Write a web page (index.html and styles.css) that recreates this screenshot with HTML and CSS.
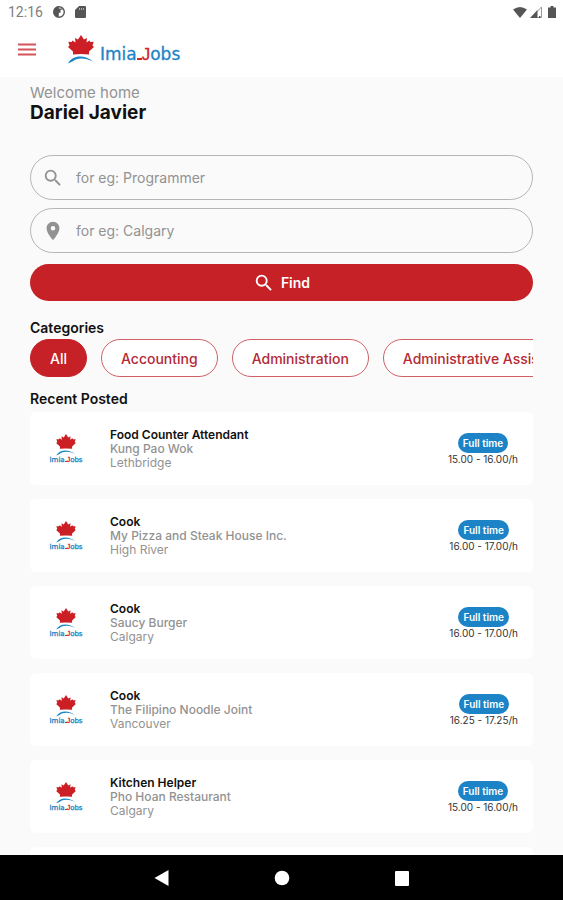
FILE: index.html
```html
<!DOCTYPE html>
<html lang="en">
<head>
    <meta charset="UTF-8">
    <meta name="viewport" content="width=device-width, initial-scale=1.0">
    <title>ImiaJobs</title>
    <link rel="stylesheet" href="styles.css">
</head>
<body>
    <!-- Shared icons -->
    <svg class="sprite" aria-hidden="true">
        <symbol id="mark" viewBox="0 0 26 29">
            <path fill="#cb1f25" d="M13 0 16 4.500 19 3 18.500 7.500 21.500 5.500 22.300 7 25.700 6.800 24.500 10.500 26 12 21 16.500 21 19.500Q13 18.500 5 19.500L5 16.500 0 12 1.500 10.500.3 6.800 3.700 7 4.500 5.500 7.500 7.500 7 3 10 4.500Z"/>
            <path fill="#1b87c5" d="M0 28.500C4 20.500 16 19 25 26.500 17 22.500 9 22.500 4.500 26.500Z"/>
        </symbol>
        <symbol id="search" viewBox="0 0 24 24">
            <path fill="currentColor" d="M15.500 14h-.79l-.28-.27A6.470 6.470 0 0 0 16 9.500 6.500 6.500 0 1 0 9.500 16c1.610 0 3.090-.59 4.230-1.570l.27.28v.79l5 4.990L20.490 19l-4.990-5zm-6 0C7.010 14 5 11.990 5 9.500S7.010 5 9.500 5 14 7.010 14 9.500 11.990 14 9.500 14z"/>
        </symbol>
        <symbol id="place" viewBox="0 0 24 24">
            <path fill="currentColor" d="M12 2C8.130 2 5 5.130 5 9c0 5.250 7 13 7 13s7-7.750 7-13c0-3.870-3.130-7-7-7zm0 9.500a2.500 2.500 0 0 1 0-5 2.500 2.500 0 0 1 0 5z"/>
        </symbol>
    </svg>

    <div class="app">
        <div class="status-bar">
            <span class="clock">12:16</span>
            <svg width="12" height="12" viewBox="0 0 12 12"><circle cx="6" cy="6" r="5.300" fill="#fff" stroke="#555" stroke-width="1.400"/><path fill="#555" d="M1 3 4 .5h1.800V11L3 10.500 1 8zM5 2.500h4.500v1.300H7.500v3H5z"/></svg>
            <svg width="11" height="12" viewBox="0 0 11 12"><path fill="#555" d="M4 0h6q1 0 1 1v10q0 1-1 1H1q-1 0-1-1V4z"/><path stroke="#aaa" d="M4.500 2v2M6.500 2v2M8.500 2v2"/></svg>
            <div class="status-right">
                <svg width="14" height="11" viewBox="0 0 14 11"><path fill="#555" d="M0 2.500q7-5 14 0L7 11z"/></svg>
                <svg width="12" height="12" viewBox="0 0 12 12"><path fill="none" stroke="#999" d="M1.500 11.500 11.500 1v10.500z"/><path fill="#555" d="M0 12 7.500 4v8zM9 10h1.500v2H9z"/></svg>
                <svg width="8" height="12" viewBox="0 0 8 12"><path fill="#555" d="M2.500 0h3v1.500H8V12H0V1.500h2.500z"/></svg>
            </div>
        </div>

        <header class="app-bar">
            <button class="menu" type="button" aria-label="Menu">
                <svg width="18" height="14" viewBox="0 0 18 14"><path stroke="#d4555b" stroke-width="2" d="M0 1.500h18M0 6.500h18M0 11.500h18"/></svg>
            </button>
            <div class="logo">
                <svg class="mark" aria-hidden="true"><use href="#mark"/></svg>
                <span class="wordmark">Imia<span class="j">J</span>obs</span>
            </div>
        </header>

        <main>
            <p class="welcome">Welcome home</p>
            <h1>Dariel Javier</h1>

            <form class="search-form">
                <label class="field">
                    <svg class="icon" aria-hidden="true"><use href="#search"/></svg>
                    <input type="text" name="job" placeholder="for eg: Programmer" aria-label="Job">
                </label>
                <label class="field">
                    <svg class="icon" aria-hidden="true"><use href="#place"/></svg>
                    <input type="text" name="city" placeholder="for eg: Calgary" aria-label="City">
                </label>
                <button class="find" type="button">
                    <svg class="icon" aria-hidden="true"><use href="#search"/></svg>
                    Find
                </button>
            </form>

            <h2>Categories</h2>
            <div class="chips">
                <button class="chip active" type="button">All</button>
                <button class="chip" type="button">Accounting</button>
                <button class="chip" type="button">Administration</button>
                <button class="chip" type="button">Administrative Assistant</button>
            </div>

            <h2>Recent Posted</h2>
            <div class="jobs">
                <article class="job">
                    <div class="job-logo">
                        <svg class="mark" aria-hidden="true"><use href="#mark"/></svg>
                        <span class="wordmark">Imia<span class="j">J</span>obs</span>
                    </div>
                    <div class="job-info">
                        <h3>Food Counter Attendant</h3>
                        <p class="company">Kung Pao Wok</p>
                        <p>Lethbridge</p>
                    </div>
                    <div class="job-pay">
                        <span class="badge">Full time</span>
                        <span class="rate">15.00 - 16.00/h</span>
                    </div>
                </article>
                <article class="job">
                    <div class="job-logo">
                        <svg class="mark" aria-hidden="true"><use href="#mark"/></svg>
                        <span class="wordmark">Imia<span class="j">J</span>obs</span>
                    </div>
                    <div class="job-info">
                        <h3>Cook</h3>
                        <p class="company">My Pizza and Steak House Inc.</p>
                        <p>High River</p>
                    </div>
                    <div class="job-pay">
                        <span class="badge">Full time</span>
                        <span class="rate">16.00 - 17.00/h</span>
                    </div>
                </article>
                <article class="job">
                    <div class="job-logo">
                        <svg class="mark" aria-hidden="true"><use href="#mark"/></svg>
                        <span class="wordmark">Imia<span class="j">J</span>obs</span>
                    </div>
                    <div class="job-info">
                        <h3>Cook</h3>
                        <p class="company">Saucy Burger</p>
                        <p>Calgary</p>
                    </div>
                    <div class="job-pay">
                        <span class="badge">Full time</span>
                        <span class="rate">16.00 - 17.00/h</span>
                    </div>
                </article>
                <article class="job">
                    <div class="job-logo">
                        <svg class="mark" aria-hidden="true"><use href="#mark"/></svg>
                        <span class="wordmark">Imia<span class="j">J</span>obs</span>
                    </div>
                    <div class="job-info">
                        <h3>Cook</h3>
                        <p class="company">The Filipino Noodle Joint</p>
                        <p>Vancouver</p>
                    </div>
                    <div class="job-pay">
                        <span class="badge">Full time</span>
                        <span class="rate">16.25 - 17.25/h</span>
                    </div>
                </article>
                <article class="job">
                    <div class="job-logo">
                        <svg class="mark" aria-hidden="true"><use href="#mark"/></svg>
                        <span class="wordmark">Imia<span class="j">J</span>obs</span>
                    </div>
                    <div class="job-info">
                        <h3>Kitchen Helper</h3>
                        <p class="company">Pho Hoan Restaurant</p>
                        <p>Calgary</p>
                    </div>
                    <div class="job-pay">
                        <span class="badge">Full time</span>
                        <span class="rate">15.00 - 16.00/h</span>
                    </div>
                </article>
                <article class="job"></article>
            </div>
        </main>

        <nav class="nav-bar">
            <button type="button" aria-label="Back"><svg width="16" height="16" viewBox="0 0 16 16"><path fill="#fff" d="M14.500 0v16L.5 8z"/></svg></button>
            <button type="button" aria-label="Home"><svg width="16" height="16" viewBox="0 0 16 16"><circle cx="8" cy="8" r="7.300" fill="#fff"/></svg></button>
            <button type="button" aria-label="Recent apps"><svg width="16" height="16" viewBox="0 0 16 16"><rect x="1" y="1" width="14" height="15" rx="1" fill="#fff"/></svg></button>
        </nav>
    </div>
</body>
</html>
```
FILE: styles.css
```css
:root {
    --red: #c52127;
    --blue: #1c84c6;
    --grey: #929292;
    --background: #fafafa;
}

* {
    box-sizing: border-box;
    margin: 0;
    padding: 0;
}

body {
    font-family: Inter, "Open Sans", sans-serif;
    background: var(--background);
    color: #111;
}

button {
    font-family: inherit;
    border: none;
    background: none;
    cursor: pointer;
}

svg {
    display: block;
    flex-shrink: 0;
}

.sprite {
    position: absolute;
    width: 0;
    height: 0;
}

.app {
    display: flex;
    flex-direction: column;
    height: 100vh;
}

.status-bar {
    display: flex;
    align-items: center;
    gap: 10px;
    height: 24px;
    padding: 0 7px 0 8px;
    background: #fff;
}

.clock {
    font-family: Roboto, sans-serif;
    font-size: 14px;
    color: #808080;
}

.status-right {
    display: flex;
    align-items: center;
    gap: 3px;
    margin-left: auto;
}

.status-right svg:last-child {
    margin-left: 3px;
}

.app-bar {
    display: flex;
    align-items: center;
    gap: 32px;
    height: 53px;
    padding: 0 18px 2px;
    background: #fff;
}

.logo {
    display: flex;
    align-items: flex-end;
    gap: 6px;
}

.logo .mark {
    width: 26px;
    height: 29px;
}

.wordmark {
    font-family: "DejaVu Sans", sans-serif;
    font-size: 17px;
    line-height: 18px;
    color: var(--blue);
    -webkit-text-stroke: 0.3px currentColor;
}

/* the J has a long foot that runs under the letter before it */
.j {
    font-family: "Liberation Sans", sans-serif;
    color: #d2232a;
}

.j::before {
    content: "";
    display: inline-block;
    width: 5px;
    height: 2px;
    background: currentColor;
}

main {
    flex: 1;
    min-height: 0;
    overflow: hidden;
    padding: 7px 30px 0;
}

.welcome {
    font-size: 15px;
    line-height: 18px;
    color: var(--grey);
}

h1 {
    font-size: 19px;
    line-height: 22px;
}

.search-form {
    display: flex;
    flex-direction: column;
    gap: 8px;
    margin-top: 31px;
}

.field {
    display: flex;
    align-items: center;
    gap: 12px;
    height: 45px;
    padding: 0 11px;
    border: 1px solid #b5b5b5;
    border-radius: 23px;
    color: var(--grey);
}

.icon {
    width: 22px;
    height: 22px;
}

.field input {
    flex: 1;
    min-width: 0;
    border: none;
    outline: none;
    background: none;
    font-family: inherit;
    font-size: 14px;
}

.field input::placeholder {
    color: var(--grey);
}

.find {
    display: flex;
    align-items: center;
    justify-content: center;
    gap: 6px;
    height: 37px;
    margin-top: 3px;
    border-radius: 19px;
    background: var(--red);
    color: #fff;
    font-size: 14px;
    font-weight: 600;
}

h2 {
    margin-top: 19px;
    font-size: 14px;
    font-weight: 600;
    line-height: 16px;
}

.chips {
    display: flex;
    gap: 14px;
    margin-top: 3px;
    overflow: hidden;
}

.chip {
    flex-shrink: 0;
    height: 38px;
    padding: 0 19px;
    border: 1px solid #cf6166;
    border-radius: 19px;
    background: #fff;
    color: #b32a35;
    font-size: 14px;
    font-weight: 500;
}

.chip.active {
    background: var(--red);
    border-color: var(--red);
    color: #fff;
}

.chips + h2 {
    margin-top: 14px;
}

.jobs {
    display: flex;
    flex-direction: column;
    gap: 14px;
    margin-top: 5px;
}

.job {
    display: flex;
    align-items: center;
    min-height: 73px;
    padding: 0 15px 0 19px;
    border-radius: 6px;
    background: #fff;
}

.job-logo {
    display: flex;
    flex-direction: column;
    align-items: center;
    width: 34px;
}

.job-logo .mark {
    width: 20px;
    height: 22px;
}

.job-logo .wordmark {
    font-size: 7px;
    line-height: 8px;
}

.job-logo .j::before {
    width: 2px;
    height: 1px;
}

.job-info {
    flex: 1;
    margin-left: 27px;
    font-size: 12px;
    line-height: 14px;
    color: var(--grey);
}

.job-info h3 {
    font-size: 12px;
    font-weight: 600;
    color: #111;
}

.company {
    font-weight: 500;
}

.job-pay {
    display: flex;
    flex-direction: column;
    align-items: center;
}

.badge {
    padding: 0 5px;
    border-radius: 10px;
    background: var(--blue);
    color: #fff;
    font-size: 10px;
    font-weight: 600;
    line-height: 20px;
}

.rate {
    font-size: 10px;
    line-height: 12px;
    color: #333;
}

.nav-bar {
    display: flex;
    align-items: center;
    justify-content: center;
    gap: 104px;
    height: 45px;
    background: #000;
}
```
